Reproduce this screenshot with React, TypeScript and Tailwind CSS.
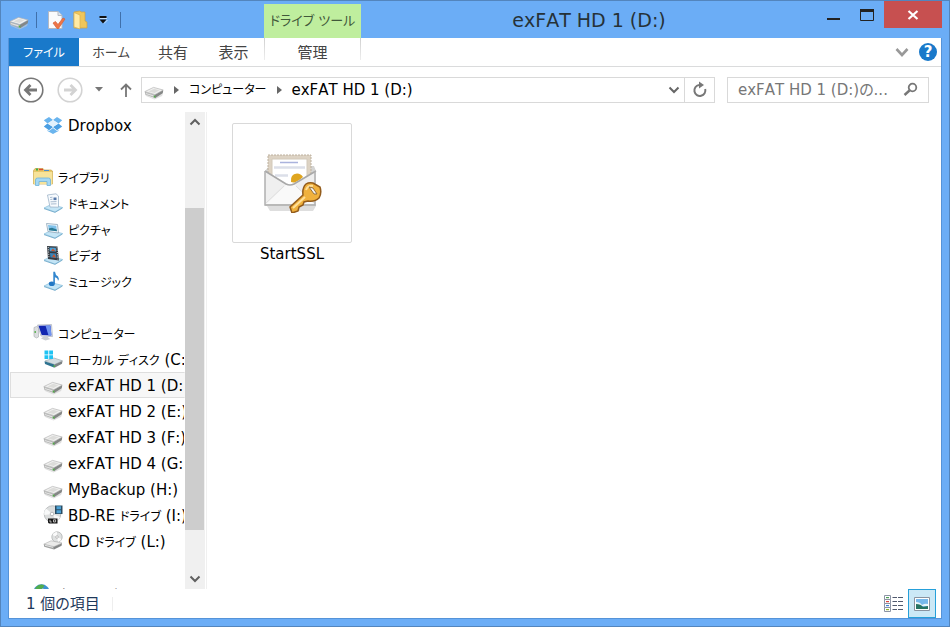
import type { ReactNode } from "react";

function DriveShape() {
  return (
    <g>
      <path d="M1 14 L10 18.6 L19 13.6 L18 16 L10.5 19.6 L2 16 Z" fill="#c9c9c9" opacity="0.6" />
      <path d="M0.8 11.6 L9.5 7.4 L19.2 10 L11 14.6 Z" fill="#f1f1f0" stroke="#b5b5b5" strokeWidth="0.7" />
      <path d="M4.5 11.4 L10 8.8 L15.5 10.2 L10.6 13 Z" fill="#dcdcda" />
      <path d="M0.8 11.8 L11 14.8 V18.2 L1.2 14.6 Z" fill="#b3b4b3" />
      <path d="M11 14.8 L19.2 10.2 L18.8 13.2 L11 18.2 Z" fill="#858786" />
      <path d="M1.8 12.9 L9.5 15.3 V16.4 L1.8 13.9 Z" fill="#e4e4e4" />
      <path d="M9.8 15.6 h1.6 v1.9 h-1.6 Z" fill="#4fae45" />
    </g>
  );
}

function BasePlate() {
  return (
    <g>
      <path d="M1 15 L8 11.5 L19.5 14.5 L12 19 Z" fill="#c4e5f6" stroke="#8abedb" strokeWidth="0.7" />
      <path d="M1 15.6 L12 19.4 L19.5 15" fill="none" stroke="#5b9cc2" strokeWidth="0.7" />
    </g>
  );
}

function Svg({ children }: { children: ReactNode }) {
  return (
    <svg width="20" height="20" viewBox="0 0 20 20" className="shrink-0" aria-hidden="true">
      {children}
    </svg>
  );
}

function DriveIcon() {
  return <Svg><DriveShape /></Svg>;
}

function SystemDriveIcon() {
  return (
    <Svg>
      <path d="M2 12 L11 9 L19.5 11.8 L11.5 15.6 Z" fill="#d3dde1" stroke="#98a3a7" strokeWidth="0.6" />
      <path d="M1.5 12.2 L11.5 15.6 V18.8 L2 15 Z" fill="#2f7390" />
      <path d="M11.5 15.6 L19.5 12 L19 14.8 L11.5 18.8 Z" fill="#7d8385" />
      <path d="M10.4 16.2 h1.5 v1.8 h-1.5 Z" fill="#4fae45" />
      <path d="M1.5 1.6 H5.3 V5.4 H1.5 Z M6.2 1.6 H10 V5.4 H6.2 Z M1.5 6.3 H5.3 V10 H1.5 Z M6.2 6.3 H10 V10 H6.2 Z" fill="#1fc3f3" />
    </Svg>
  );
}

function DropboxIcon() {
  return (
    <Svg>
      <path d="M6 2 L10 5 L4.5 8.5 L0.8 5.3 Z M14 2 L19.2 5.3 L15.5 8.5 L10 5 Z" fill="#69b4ee" />
      <path d="M4.5 8.5 L10 12 L6 15.2 L0.8 11.6 Z M15.5 8.5 L19.2 11.6 L14 15.2 L10 12 Z" fill="#4b9fe3" />
      <path d="M4.5 8.5 L10 5 L15.5 8.5 L10 12 Z" fill="#e3f2fd" />
      <path d="M4.5 15 L6 16 L10 12.9 L14 16 L15.5 15 V16 L10 19 L4.5 16 Z" fill="#6bb5ee" />
    </Svg>
  );
}

function LibraryIcon() {
  return (
    <Svg>
      <path d="M0.5 3.5 L2 1.5 H10 L11 3 H18 L19.5 4 V17 H0.5 Z" fill="#e8c869" stroke="#c9a64b" strokeWidth="0.7" />
      <path d="M3 1.6 h2 v2 h-2 Z" fill="#3cae4a" />
      <path d="M6 1.8 h4 v1.4 h-4 Z" fill="#d94a35" />
      <path d="M11 3 h5 v1 h-5 Z" fill="#4b8ccc" />
      <path d="M0.8 5 H19.2 V17 H0.8 Z" fill="#f7e39a" />
      <path d="M2.5 18.5 V13 Q2.5 11 4.5 11 H15.5 Q17.5 11 17.5 13 V18.5 H14 V14.5 H6 V18.5 Z" fill="#a5d8f3" stroke="#6fb3d9" strokeWidth="0.8" />
    </Svg>
  );
}

function DocumentIcon() {
  return (
    <Svg>
      <BasePlate />
      <path d="M4.5 2 L13 0.8 L15.5 3 V14.2 L7 14 Z" fill="#f8fbfe" stroke="#9db2c8" strokeWidth="0.8" />
      <path d="M7 4.5 L9.5 4.2 M7.3 6.5 L9.5 6.2 M7.5 8.8 L13.5 8.6 M7.8 11 L13.5 10.8" stroke="#9fb3c9" strokeWidth="0.9" />
      <path d="M10.5 4.5 h3 v2.6 h-3 Z" fill="#5577a8" />
    </Svg>
  );
}

function PictureIcon() {
  return (
    <Svg>
      <BasePlate />
      <path d="M3.5 4.5 L14.5 5.5 L15.5 14 L5 12.5 Z" fill="#f4f9fc" stroke="#8da5b8" strokeWidth="0.8" />
      <path d="M5 6 L13.3 6.8 L14 12.3 L6 11.2 Z" fill="#7fc1ea" />
      <path d="M5.7 9.4 L9 8.8 L13.7 10.6 L14 12.3 L6 11.2 Z" fill="#2b7a93" />
    </Svg>
  );
}

function VideoIcon() {
  return (
    <Svg>
      <BasePlate />
      <path d="M4 1 L14.5 1.5 L16 15.5 L5 14 Z" fill="#343a41" />
      <path d="M6.5 2.4 L12.8 2.8 L13.1 6.6 L6.8 6.2 Z" fill="#4d9fd5" />
      <path d="M7 8 L13.2 8.5 L13.6 13 L7.4 12.4 Z" fill="#3983b6" />
      <path d="M8 5.8 L10 3.5 L12.5 6.2 Z M9 12 L11 9 L13 12.7 Z" fill="#c6552e" />
      <path d="M5.2 2 L6 13.5 M14 2.4 L14.8 14.4" stroke="#e9edf0" strokeWidth="0.9" strokeDasharray="1 1.3" />
    </Svg>
  );
}

function MusicIcon() {
  return (
    <Svg>
      <BasePlate />
      <ellipse cx="8.8" cy="12.8" rx="3" ry="2.3" fill="#2277c4" />
      <path d="M10.3 13 V0.8 H12 Q12.2 4 15 5.5 Q16.5 7.3 15 10 Q15 7 11.9 6.2 V13 Z" fill="#3286ce" />
    </Svg>
  );
}

function ComputerIcon() {
  return (
    <Svg>
      <path d="M1 4.5 L3.5 3.5 L5.5 4.5 V14 L3.5 15 L1 13.5 Z" fill="#dcdee0" stroke="#a5a9ad" strokeWidth="0.6" />
      <path d="M1.6 8 h1.2 v2 h-1.2 Z" fill="#49ad3b" />
      <path d="M4.5 2 L18.5 1.5 L19.5 13.6 L8 13 Z" fill="#eceef4" stroke="#a9adb8" strokeWidth="0.7" />
      <path d="M5.5 2.8 L17.5 2.5 L18.4 12.6 L8.7 12 Z" fill="#1226b0" />
      <path d="M12.5 2.6 L17.5 2.5 L18.4 12.6 L15.5 12.4 Z" fill="#6f93f0" />
      <path d="M11 13.2 L15 13.5 L15.5 15 L17.5 16 L12.5 17.6 L8 15.4 Z" fill="#cbced3" />
    </Svg>
  );
}

function BluRayIcon() {
  return (
    <Svg>
      <circle cx="9.5" cy="9" r="8.3" fill="#dcdede" stroke="#aaadaf" strokeWidth="0.7" />
      <path d="M9.5 9 L3 3.5 A8.3 8.3 0 0 0 1.3 10 Z M9.5 9 L13 16.5 A8.3 8.3 0 0 0 17 12 Z" fill="#f8f9f9" />
      <circle cx="9" cy="9" r="1.8" fill="#fff" stroke="#a0a4a6" strokeWidth="0.7" />
      <path d="M12 0.5 H19.5 V9 H12 Z" fill="#2b4d63" />
      <path d="M13.5 1.3 H18 V4.2 H13.5 Z M13.5 5.2 H18 V8.2 H13.5 Z" fill="#4ba0d4" />
      <path d="M5 13.5 H14.5 V18.5 H6 L5 17.5 Z" fill="#151515" />
      <path d="M7 14.8 V17 H8.8 M10.5 14.8 H12.6 V17 H10.5 Z" fill="none" stroke="#ddd" strokeWidth="0.8" />
    </Svg>
  );
}

function CdIcon() {
  return (
    <Svg>
      <circle cx="14" cy="6" r="5.2" fill="#dfe1e1" stroke="#a8abab" strokeWidth="0.7" />
      <path d="M14 6 L9.5 4 A5 5 0 0 1 14 1 Z M14 6 L18.5 8 A5 5 0 0 1 15 11 Z" fill="#fafafa" />
      <circle cx="14" cy="6" r="1.3" fill="#fff" stroke="#999" strokeWidth="0.6" />
      <path d="M0.8 13.2 L8 9.8 L19 12 L11 15.6 Z" fill="#ebebea" stroke="#b0b0b0" strokeWidth="0.6" />
      <path d="M0.8 13.3 L11 15.8 V18.6 L1.2 15.8 Z" fill="#a0a2a1" />
      <path d="M11 15.8 L19 12.2 L18.6 14.8 L11 18.6 Z" fill="#868888" />
      <path d="M2 14.3 L10 16.3" stroke="#e6e6e6" />
    </Svg>
  );
}

function NetworkIcon() {
  return (
    <Svg>
      <circle cx="8.5" cy="9.5" r="8.2" fill="#3d92cf" />
      <path d="M3 4 Q7 0.5 11 2 Q11 5 8 6 Q7 9 3 10 Q1.5 7 3 4 Z" fill="#53ad4c" />
      <path d="M9 6 L19 8 V17 L9 15 Z" fill="#2245b9" stroke="#d5dbe4" />
    </Svg>
  );
}

function MailCertificateIcon() {
  return (
    <svg width="60" height="60" viewBox="0 0 60 60" aria-hidden="true">
      <path d="M5 53 H54 L51 58 H8 Z" fill="#dedede" />
      <path d="M3 18 L7 13 H52 L54 18 V53 H3 Z" fill="#d4d4d3" />
      <path d="M6 2 H49 V34 H6 Z" fill="#ddd3c4" stroke="#bdb09d" strokeDasharray="2 1" />
      <path d="M10 6 H45 V34 H10 Z" fill="#fff" stroke="#d2c9ba" />
      <path d="M18 9.5 H36" stroke="#aab3dd" strokeWidth="1.5" />
      <path d="M12 14.5 H43 M13 22.5 H26" stroke="#dcdfe9" strokeWidth="2.5" />
      <path d="M29 29 Q28 21 35 20.5 Q39 20.5 41 24 L34 30 Z" fill="#dfa51f" />
      <path d="M3 18 L28 32 L54 18 V51 H3 Z" fill="#efefef" />
      <path d="M4 51 L25 31 H32 L52 51 Z" fill="#f9f9f9" />
      <path d="M4 50 L22 33 M52 50 L34 33" stroke="#dedede" />
      <path d="M3 18 L24 31 Q28 33 32 31 L54 18" fill="none" stroke="#a8a8a8" strokeWidth="1.5" />
      <path d="M3 18 V52 H53 V18" fill="none" stroke="#b0b0b0" strokeWidth="1.5" />
      <path d="M44 31 Q47 29 51 30 L58 34 Q60 40 57 45 Q53 49 46 48 L42 49 L41 52 L37 54 L36 58 L30 60 L28 54 L41 42 Q40 35 44 31 Z" fill="#f0b13d" stroke="#935c1c" strokeWidth="1.5" />
      <path d="M44 37 Q46 32 51 33 M31 55 L43 44" fill="none" stroke="#ffe09a" strokeWidth="2" />
      <path d="M47 34 L51 35 L55 41 L52 41 Z" fill="#f5f5f5" stroke="#94703d" />
    </svg>
  );
}

type Item = { label: ReactNode; icon: ReactNode; group?: boolean; selected?: boolean };

function Kana({ children }: { children: ReactNode }) {
  return <span className="text-[12px]">{children}</span>;
}

const sections: Item[][] = [
  [{ label: "Dropbox", icon: <DropboxIcon /> }],
  [
    { label: <Kana>ライブラリ</Kana>, icon: <LibraryIcon />, group: true },
    { label: <Kana>ドキュメント</Kana>, icon: <DocumentIcon /> },
    { label: <Kana>ピクチャ</Kana>, icon: <PictureIcon /> },
    { label: <Kana>ビデオ</Kana>, icon: <VideoIcon /> },
    { label: <Kana>ミュージック</Kana>, icon: <MusicIcon /> },
  ],
  [
    { label: <Kana>コンピューター</Kana>, icon: <ComputerIcon />, group: true },
    { label: <><Kana>ローカル ディスク</Kana> (C:)</>, icon: <SystemDriveIcon /> },
    { label: "exFAT HD 1 (D:)", icon: <DriveIcon />, selected: true },
    { label: "exFAT HD 2 (E:)", icon: <DriveIcon /> },
    { label: "exFAT HD 3 (F:)", icon: <DriveIcon /> },
    { label: "exFAT HD 4 (G:)", icon: <DriveIcon /> },
    { label: "MyBackup (H:)", icon: <DriveIcon /> },
    { label: <>BD-RE <Kana>ドライブ</Kana> (I:)</>, icon: <BluRayIcon /> },
    { label: <>CD <Kana>ドライブ</Kana> (L:)</>, icon: <CdIcon /> },
  ],
  [{ label: <Kana>ネットワーク</Kana>, icon: <NetworkIcon />, group: true }],
];

function TreeItem({ item }: { item: Item }) {
  return (
    <li>
      <button
        className={`flex h-[26px] w-full items-center gap-[5px] overflow-hidden border whitespace-nowrap ${
          item.group ? "pl-[22px]" : "pl-8"
        } ${item.selected ? "border-[#dedede] border-r-transparent bg-[#f7f7f7]" : "border-transparent"}`}
      >
        {item.icon}
        <span className="pt-0.5">{item.label}</span>
      </button>
    </li>
  );
}

function Chevron({ up = false }: { up?: boolean }) {
  return (
    <svg width="12" height="8" viewBox="0 0 12 8" aria-hidden="true">
      <path d={up ? "M1.5 6.5 L6 2 L10.5 6.5" : "M1.5 1.5 L6 6 L10.5 1.5"} fill="none" stroke="currentColor" strokeWidth="2" />
    </svg>
  );
}

function TitleBar() {
  return (
    <header className="flex h-[37px] shrink-0 items-start">
      <div className="flex h-full w-[263px] shrink-0 items-center pl-2">
        <DriveIcon />
        <span className="ml-[7px] h-4 w-px bg-[#3f70ab]" />
        <button aria-label="プロパティ" className="ml-2.5">
          <svg width="20" height="20" viewBox="0 0 20 20">
            <path d="M1.5 1.5 H11 L15 5.5 V18.5 H1.5 Z" fill="#fbfbfc" stroke="#b4b9c3" />
            <path d="M11 1.5 V5.5 H15" fill="#dde3eb" stroke="#b4b9c3" />
            <path d="M6 13 L8.5 11.5 L11 14.5 L16 8 L18 9 L11.5 18.5 H10 Z" fill="#ef7547" stroke="#d3603a" strokeWidth="0.7" />
          </svg>
        </button>
        <button aria-label="新しいフォルダー" className="ml-1">
          <svg width="20" height="20" viewBox="0 0 20 20">
            <path d="M3 2 L9 1 L10 2 H14 V11 L16 12 V18 H3 Z" fill="#efc65c" stroke="#cfa23f" strokeWidth="0.7" />
            <path d="M3 2.5 L9 5 V19 L3 17 Z" fill="#ffeaa3" stroke="#d8b04d" strokeWidth="0.7" />
          </svg>
        </button>
        <button aria-label="クイック アクセスのカスタマイズ" className="ml-2">
          <svg width="9" height="8" viewBox="0 0 9 8">
            <path d="M0.5 0 H7.5 V2 H0.5 Z M0.5 3.5 H7.5 L4 7.5 Z" fill="#111" />
            <path d="M1 2.5 H8 M5 7.5 L8.5 4" fill="none" stroke="#fff" strokeWidth="0.6" />
          </svg>
        </button>
        <span className="ml-3 h-4 w-px bg-[#3f70ab]" />
      </div>
      <div className="mt-[3px] flex h-[34px] w-[97px] shrink-0 items-center justify-center bg-[#bfee9e] text-[13px] whitespace-nowrap text-[#41583a]">
        ドライブ ツール
      </div>
      <h1 className="flex h-full grow items-center justify-center text-[19px] text-[#263238]">exFAT HD 1 (D:)</h1>
      <div className="flex shrink-0 text-[#222]">
        <button aria-label="最小化" className="flex h-[27px] w-8 items-center justify-center">
          <svg width="14" height="14" viewBox="0 0 14 14"><path d="M1 10 H14 V12 H1 Z" fill="currentColor" /></svg>
        </button>
        <button aria-label="最大化" className="flex h-[27px] w-[35px] items-center justify-center">
          <svg width="16" height="14" viewBox="0 0 16 14">
            <path d="M1.5 1.5 H14.5 V12.5 H1.5 Z" fill="none" stroke="currentColor" />
            <path d="M1 1 H15 V4 H1 Z" fill="currentColor" />
          </svg>
        </button>
        <button aria-label="閉じる" className="mr-[7px] flex h-[27px] w-[58px] items-center justify-center bg-[#c75050]">
          <svg width="12" height="10" viewBox="0 0 12 10"><path d="M1.5 1 L10.5 9 M10.5 1 L1.5 9" stroke="#fff" strokeWidth="2.2" /></svg>
        </button>
      </div>
    </header>
  );
}

function Ribbon() {
  return (
    <nav className="flex h-[29px] shrink-0 border-b border-[#dadbdc] text-[#444]">
      <button className="w-[70px] bg-[#1979ca] pt-0.5 text-[12px] text-white">ファイル</button>
      <button className="w-16 pt-0.5 text-[13px]">ホーム</button>
      <button className="w-[60px] pt-0.5">共有</button>
      <button className="w-[61px] pt-0.5">表示</button>
      <div className="flex">
        <span className="h-[22px] w-px bg-linear-to-b from-[#d0d0d0] to-[#eee]" />
        <button className="w-[95px] pt-0.5">管理</button>
        <span className="h-[22px] w-px bg-linear-to-b from-[#d0d0d0] to-[#eee]" />
      </div>
      <div className="ml-auto flex items-center gap-2.5 pr-1">
        <button aria-label="リボンの展開" className="text-[#999]">
          <svg width="14" height="9" viewBox="0 0 14 9"><path d="M1.5 1 L7 7 L12.5 1" fill="none" stroke="currentColor" strokeWidth="2.6" /></svg>
        </button>
        <button aria-label="ヘルプ" className="flex size-[18px] items-center justify-center rounded-full bg-[#1979ca] text-[15px] font-bold text-white">?</button>
      </div>
    </nav>
  );
}

function RoundArrow({ forward = false }: { forward?: boolean }) {
  return (
    <svg width="26" height="26" viewBox="0 0 26 26">
      <circle cx="13" cy="13" r="11.8" fill="none" stroke="currentColor" strokeWidth="1.6" />
      <path
        d={forward ? "M7 13 H18 M13.5 8 L18.5 13 L13.5 18" : "M19 13 H8 M12.5 8 L7.5 13 L12.5 18"}
        fill="none"
        stroke="currentColor"
        strokeWidth="2.8"
      />
    </svg>
  );
}

function Crumb() {
  return (
    <svg width="5" height="8" viewBox="0 0 5 8" aria-hidden="true">
      <path d="M0 0 L5 4 L0 8 Z" fill="#666" />
    </svg>
  );
}

function AddressRow() {
  return (
    <div className="flex h-[45px] shrink-0 items-center pr-3 pl-[9px]">
      <button aria-label="戻る" className="text-[#777]"><RoundArrow /></button>
      <button aria-label="進む" className="ml-[13px] text-[#d3d3d3]"><RoundArrow forward /></button>
      <button aria-label="最近表示した場所" className="ml-3">
        <svg width="8" height="5" viewBox="0 0 8 5"><path d="M0 0 H8 L4 4.5 Z" fill="#777" /></svg>
      </button>
      <button aria-label="上へ" className="ml-4">
        <svg width="14" height="16" viewBox="0 0 14 16"><path d="M7 15 V2 M2 7.5 L7 2.5 L12 7.5" fill="none" stroke="#777" strokeWidth="1.8" /></svg>
      </button>
      <div className="ml-2 flex h-[26px] grow items-center border border-[#d9d9d9]">
        <div className="flex items-center gap-2.5 pl-0.5">
          <DriveIcon />
          <Crumb />
          <button><Kana>コンピューター</Kana></button>
          <Crumb />
          <button>exFAT HD 1 (D:)</button>
        </div>
        <button aria-label="以前の場所" className="mr-1 ml-auto text-[#666]"><Chevron /></button>
        <button aria-label="最新の情報に更新" className="flex h-full w-[30px] items-center justify-center border-l border-[#d9d9d9]">
          <svg width="16" height="18" viewBox="0 0 16 18">
            <path d="M7 4 A5.5 5.5 0 1 0 13.2 8" fill="none" stroke="#777" strokeWidth="2" />
            <path d="M7 0.5 L12 4 L7 7.5 Z" fill="#777" />
          </svg>
        </button>
      </div>
      <label className="ml-3 flex h-[26px] w-[202px] shrink-0 items-center border border-[#d9d9d9] px-2.5">
        <input
          type="search"
          aria-label="検索"
          placeholder="exFAT HD 1 (D:)の..."
          className="w-0 min-w-0 grow outline-none placeholder:text-[#777]"
        />
        <svg width="15" height="15" viewBox="0 0 15 15" aria-hidden="true">
          <circle cx="9.5" cy="5.5" r="3.8" fill="none" stroke="#777" strokeWidth="1.8" />
          <path d="M6.5 8.5 L1.5 13" stroke="#777" strokeWidth="2.4" />
        </svg>
      </label>
    </div>
  );
}

function Sidebar() {
  return (
    <aside className="flex w-[198px] shrink-0 border-r border-[#f0f0f0]">
      <div className="min-w-0 grow overflow-hidden pl-px">
        {sections.map((items, i) => (
          <ul key={i} className="mb-[26px]">
            {items.map((item, j) => (
              <TreeItem key={j} item={item} />
            ))}
          </ul>
        ))}
      </div>
      <div className="mr-px flex w-5 shrink-0 flex-col items-stretch bg-[#f0f0f0] text-[#606060]">
        <button aria-label="上へスクロール" className="flex h-5 shrink-0 items-center justify-center"><Chevron up /></button>
        <div className="grow-[76]" />
        <div className="mr-px grow-[322] bg-[#cdcdcd]" />
        <div className="grow-[39]" />
        <button aria-label="下へスクロール" className="flex h-5 shrink-0 items-center justify-center"><Chevron /></button>
      </div>
    </aside>
  );
}

function StatusBar() {
  return (
    <footer className="flex h-[29px] shrink-0 items-center pr-[5px] pl-[17px] text-[#1e395b]">
      <span>1 個の項目</span>
      <span className="ml-3 h-3.5 w-px bg-[#eee]" />
      <div className="ml-auto flex h-full items-center">
        <button aria-label="詳細表示" className="mr-1">
          <svg width="20" height="18" viewBox="0 0 20 18">
            {["#4d9f54", "#d9443d", "#3d81d6", "#93b829"].map((color, i) => (
              <g key={color} transform={`translate(0 ${i * 4})`}>
                <path d="M0.5 0.5 H6.5 V4.5 H0.5 Z" fill="#fff" stroke="#8c94a5" />
                <path d="M2 2 H5 V3.2 H2 Z" fill={color} />
                <path d="M8.5 2.5 H13 M14 2.5 H19" stroke="#50596d" />
              </g>
            ))}
          </svg>
        </button>
        <button aria-label="大アイコン表示" className="flex h-full w-7 items-center justify-center border border-[#26a0da] bg-[#cbe8f6]">
          <svg width="16" height="14" viewBox="0 0 16 14">
            <path d="M0.5 0.5 H15.5 V13.5 H0.5 Z" fill="#fff" stroke="#8a93a0" />
            <path d="M2 2 H14 V12 H2 Z" fill="#77b8eb" />
            <path d="M2 5 Q6 5 8 8 Q11 6 14 7 V9 H2 Z" fill="#e9f5fb" />
            <path d="M2 7 Q7 7 9 10 L14 9 V12 H2 Z" fill="#277362" />
          </svg>
        </button>
      </div>
    </footer>
  );
}

export default function App() {
  return (
    <div className="flex h-screen flex-col border border-[#5385bd] bg-[#6badf6] font-['DejaVu_Sans','Noto_Sans_CJK_JP',sans-serif] text-[15px] leading-5 text-black [font-feature-settings:'palt'] [font-kerning:none]">
      <TitleBar />
      <div className="mx-[7px] mb-[7px] flex min-h-0 grow flex-col border border-t-0 border-[#5593d8] bg-white">
        <Ribbon />
        <AddressRow />
        <div className="flex min-h-0 grow">
          <Sidebar />
          <main className="grow pt-[11px] pl-[25px]">
            <button className="flex w-[120px] flex-col items-center gap-px">
              <span className="flex size-[120px] items-center justify-center rounded-xs border border-[#d9d9d9]">
                <MailCertificateIcon />
              </span>
              <span>StartSSL</span>
            </button>
          </main>
        </div>
        <StatusBar />
      </div>
    </div>
  );
}
